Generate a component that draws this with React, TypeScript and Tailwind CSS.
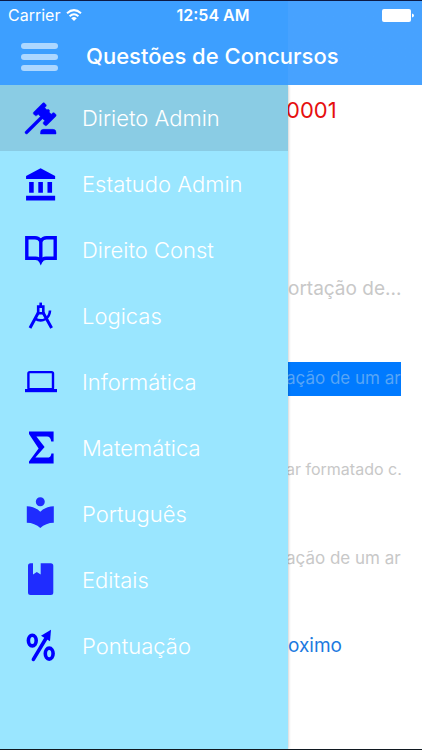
import React from 'react';

interface MenuItem {
    label: string;
    icon: React.ReactNode;
    active?: boolean;
}

const menuItems: MenuItem[] = [
    {
        label: 'Dirieto Admin',
        active: true,
        icon: (
            <path
                transform="translate(1.9 1.9) scale(1.55)"
                stroke="currentColor"
                strokeWidth="0.3"
                d="M2.3,20.28L11.9,10.68L10.5,9.26L9.78,9.97C9.39,10.36 8.76,10.36 8.37,9.97L7.66,9.26C7.27,8.87 7.27,8.24 7.66,7.85L13.32,2.19C13.71,1.8 14.34,1.8 14.73,2.19L15.44,2.9C15.83,3.29 15.83,3.92 15.44,4.31L14.73,5L16.15,6.43C16.54,6.04 17.17,6.04 17.56,6.43C17.95,6.82 17.95,7.46 17.56,7.85L18.97,9.26L19.68,8.55C20.07,8.16 20.71,8.16 21.1,8.55L21.8,9.26C22.19,9.65 22.19,10.29 21.8,10.68L16.15,16.33C15.76,16.72 15.12,16.72 14.73,16.33L14.03,15.63C13.63,15.24 13.63,14.6 14.03,14.21L14.73,13.5L13.32,12.09L3.71,21.7C3.32,22.09 2.69,22.09 2.3,21.7C1.91,21.31 1.91,20.67 2.3,20.28M20,19A2,2 0 0,1 22,21V22H12V21A2,2 0 0,1 14,19H20Z"
            />
        ),
    },
    {
        label: 'Estatudo Admin',
        icon: (
            <path
                transform="translate(3 2.8) scale(1.53)"
                d="M11.5,1L2,6V8H21V6M16,10V17H19V10M2,22H21V19H2M10,10V17H13V10M4,10V17H7V10H4Z"
            />
        ),
    },
    {
        label: 'Direito Const',
        icon: (
            <g fill="none" stroke="currentColor" strokeWidth="3.4">
                <path d="M6.8 7.8H15Q18.6 7.8 20.8 11Q23 7.8 26.5 7.8H35.2V28.2H26Q22.5 28.2 20.8 31.6Q19.2 28.2 15.5 28.2H6.8Z" />
                <path d="M20.8 11V32" />
            </g>
        ),
    },
    {
        label: 'Logicas',
        icon: (
            <g fill="none" stroke="currentColor" strokeWidth="2.6">
                <path d="M20.7 6.6V10" />
                <path d="M18.2 10.6H23.3V17.2H18.2Z" />
                <path d="M18.4 16.5L10 32M23 16.5L31.6 32" strokeWidth="3" />
                <path d="M15 22.6Q20.5 26 25.5 23Q29.8 20.2 30 14.5" />
            </g>
        ),
    },
    {
        label: 'Informática',
        icon: (
            <>
                <rect x="8.4" y="10.1" width="24.6" height="17" rx="1.4" fill="none" stroke="currentColor" strokeWidth="2.4" />
                <path d="M5 27H37V30.2H5Z" />
            </>
        ),
    },
    {
        label: 'Matemática',
        icon: (
            <path d="M9 3.5H33.6V13.5H31.2Q30.6 8.4 27 8.4H16.4L24.6 19L15.4 29.6H27Q31 29.6 31.4 25.4H33.6V35.5H9V33.6L18.6 20.4L9 6Z" />
        ),
    },
    {
        label: 'Português',
        icon: (
            <path
                className="text-[#1f2cff]"
                fill="currentColor"
                transform="translate(2.3 .3) scale(1.5)"
                d="M12 11.55C9.64 9.35 6.48 8 3 8v11c3.48 0 6.64 1.35 9 3.55 2.36-2.19 5.52-3.55 9-3.55V8c-3.48 0-6.64 1.35-9 3.55zM12 8c1.66 0 3-1.34 3-3s-1.34-3-3-3-3 1.34-3 3 1.34 3 3 3z"
            />
        ),
    },
    {
        label: 'Editais',
        icon: (
            <path
                className="text-[#1f2cff]"
                fill="currentColor"
                d="M10.5 3.3H13V14.4L16.8 11.9L20.7 14.4V3.3H30.8Q33.3 3.3 33.3 5.8V32.5Q33.3 35 30.8 35H10.5Q8 35 8 32.5V5.8Q8 3.3 10.5 3.3Z"
            />
        ),
    },
    {
        label: 'Pontuação',
        icon: (
            <>
                <g fill="none" stroke="currentColor" strokeWidth="3.6" strokeLinecap="round">
                    <ellipse cx="12.3" cy="14.6" rx="3.9" ry="5.3" />
                    <ellipse cx="29.2" cy="27.6" rx="3.9" ry="5.5" />
                    <path d="M13.4 33.4L26.5 11.5" />
                </g>
                <path d="M31 3.8L21 9.8L30 15.2Z" />
            </>
        ),
    },
];

const StatusBar: React.FC = () => (
    <div className="grid grid-cols-[1fr_auto_1fr] items-center h-7 pl-2 pr-2 text-base">
        <div className="flex items-center gap-1.5">
            <span>Carrier</span>
            <svg viewBox="0 0 16 12" className="w-4 h-3" fill="none" stroke="currentColor" strokeWidth="2">
                <path d="M1 4.2Q8 -2 15 4.2M3.6 7.2Q8 3.4 12.4 7.2" />
                <path d="M8 12L5.2 9.2Q8 7 10.8 9.2Z" fill="currentColor" stroke="none" />
            </svg>
        </div>
        <span className="pl-1 font-semibold whitespace-nowrap">12:54 AM</span>
        <svg viewBox="0 0 32 13" className="w-8 h-[13px] justify-self-end" fill="currentColor">
            <rect x="0" y="0" width="29" height="13" rx="2" />
            <path d="M30 4.5Q32 5 32 6.5Q32 8 30 8.5Z" />
        </svg>
    </div>
);

const Header: React.FC = () => (
    <header className="shrink-0 border-t border-[#0c1a45] bg-linear-to-r from-[#3d9fff] from-[288px] to-[#47a2ff] to-[288px] text-white">
        <StatusBar />
        <div className="flex items-center h-14 pl-[21px] gap-7 pb-px">
            <button type="button" aria-label="Menu" className="flex flex-col gap-[5px] w-[37px]">
                <span className="h-1.5 w-full rounded-full bg-[#add7ff]" />
                <span className="h-1.5 w-full rounded-full bg-[#add7ff]" />
                <span className="h-1.5 w-full rounded-full bg-[#add7ff]" />
            </button>
            <h1 className="text-[22px] font-medium whitespace-nowrap">Questões de Concursos</h1>
        </div>
    </header>
);

const Drawer: React.FC = () => (
    <nav className="relative z-10 w-72 shrink-0 bg-[#9ae6ff] shadow-[0_0_3px_rgba(0,0,0,0.3)]">
        <ul>
            {menuItems.map((item) => (
                <li key={item.label}>
                    <a
                        href="#"
                        className={`flex items-center h-[66px] pl-5 gap-[22px] text-[22px] font-light text-white ${item.active ? 'bg-[#8acce4]' : ''}`}
                    >
                        <svg viewBox="0 0 40 40" className="size-10 shrink-0 text-[#0000ff]" fill="currentColor">
                            {item.icon}
                        </svg>
                        {item.label}
                    </a>
                </li>
            ))}
        </ul>
    </nav>
);

const Question: React.FC = () => (
    <main className="flex-1 min-w-0 flex flex-col pr-[21px] text-[17px] text-[#c8c8c8] whitespace-nowrap">
        <p className="h-[50px] -ml-0.5 text-[22px] leading-[50px] text-[#e60f0f]">0001</p>
        <p className="mt-[137px] h-[34px] text-[19px] leading-[34px]">ortação de...</p>
        <button type="button" className="mt-14 h-[34px] -ml-0.5 text-left bg-[#007aff] text-[#58a5f5]">ação de um ar</button>
        <button type="button" className="mt-14 h-[34px] -ml-0.5 text-left text-base">ar formatado c.</button>
        <button type="button" className="mt-14 h-[34px] -ml-0.5 text-left">ação de um ar</button>
        <button type="button" className="mt-[53px] h-[34px] self-start text-[19px] text-[#1c7ae0]">oximo</button>
    </main>
);

const App: React.FC = () => {
    return (
        <div className="min-h-screen flex flex-col overflow-hidden bg-white border-b border-[#101820] font-['Inter','Liberation_Sans',sans-serif]">
            <Header />
            <div className="flex-1 flex overflow-hidden">
                <Drawer />
                <Question />
            </div>
        </div>
    );
};

export default App;
